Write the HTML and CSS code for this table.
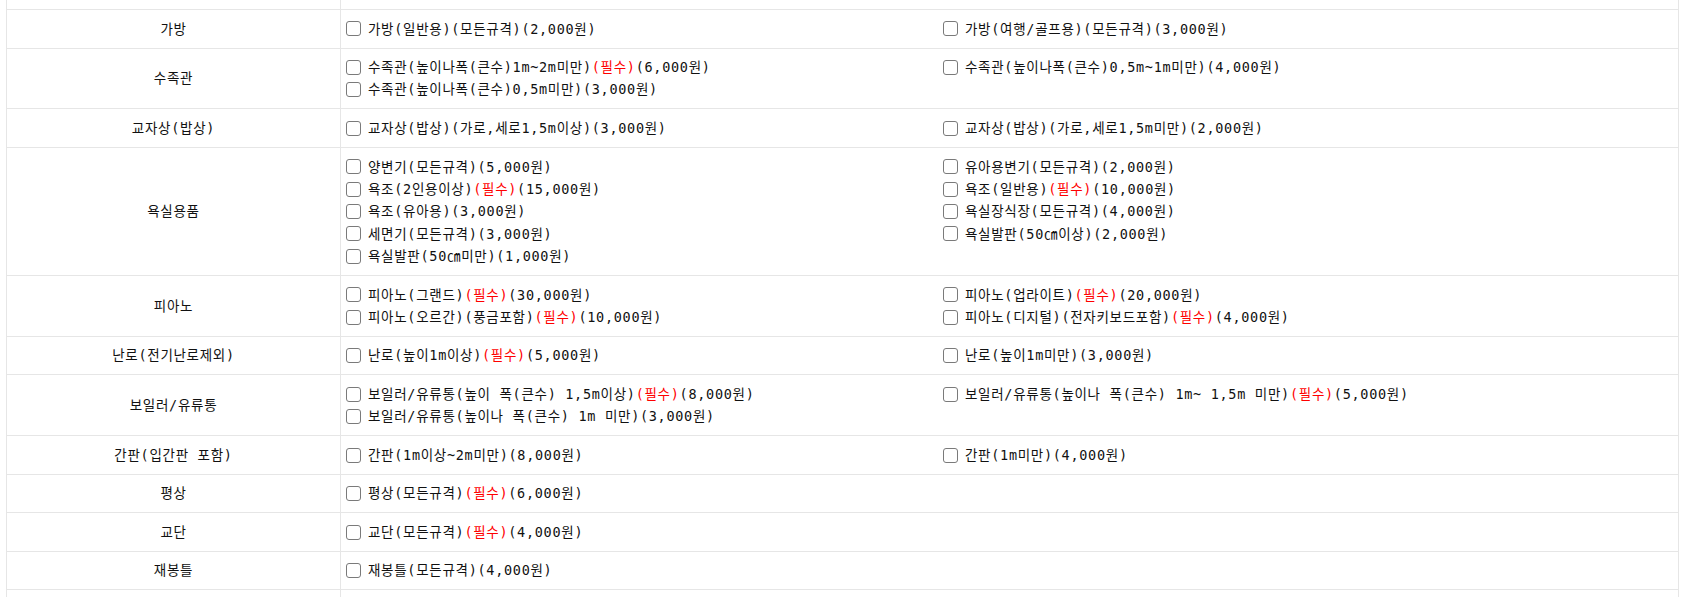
FILE: index.html
```html
<!DOCTYPE html>
<html lang="ko">
<head>
<meta charset="utf-8">
<title>품목 선택</title>
<link rel="stylesheet" href="styles.css">
</head>
<body>
<div class="board">
  <div class="row cut"><div class="label"></div><div class="cell"></div></div>

  <div class="row">
    <div class="label">가방</div>
    <div class="cell"><ul class="items">
      <li><input type="checkbox"><span>가방(일반용)(모든규격)(2,000원)</span></li>
      <li><input type="checkbox"><span>가방(여행/골프용)(모든규격)(3,000원)</span></li>
    </ul></div>
  </div>

  <div class="row">
    <div class="label">수족관</div>
    <div class="cell"><ul class="items">
      <li><input type="checkbox"><span>수족관(높이나폭(큰수)1m~2m미만)<em>(필수)</em>(6,000원)</span></li>
      <li><input type="checkbox"><span>수족관(높이나폭(큰수)0,5m~1m미만)(4,000원)</span></li>
      <li><input type="checkbox"><span>수족관(높이나폭(큰수)0,5m미만)(3,000원)</span></li>
    </ul></div>
  </div>

  <div class="row">
    <div class="label">교자상(밥상)</div>
    <div class="cell"><ul class="items">
      <li><input type="checkbox"><span>교자상(밥상)(가로,세로1,5m이상)(3,000원)</span></li>
      <li><input type="checkbox"><span>교자상(밥상)(가로,세로1,5m미만)(2,000원)</span></li>
    </ul></div>
  </div>

  <div class="row">
    <div class="label">욕실용품</div>
    <div class="cell"><ul class="items">
      <li><input type="checkbox"><span>양변기(모든규격)(5,000원)</span></li>
      <li><input type="checkbox"><span>유아용변기(모든규격)(2,000원)</span></li>
      <li><input type="checkbox"><span>욕조(2인용이상)<em>(필수)</em>(15,000원)</span></li>
      <li><input type="checkbox"><span>욕조(일반용)<em>(필수)</em>(10,000원)</span></li>
      <li><input type="checkbox"><span>욕조(유아용)(3,000원)</span></li>
      <li><input type="checkbox"><span>욕실장식장(모든규격)(4,000원)</span></li>
      <li><input type="checkbox"><span>세면기(모든규격)(3,000원)</span></li>
      <li><input type="checkbox"><span>욕실발판(50㎝이상)(2,000원)</span></li>
      <li><input type="checkbox"><span>욕실발판(50㎝미만)(1,000원)</span></li>
    </ul></div>
  </div>

  <div class="row">
    <div class="label">피아노</div>
    <div class="cell"><ul class="items">
      <li><input type="checkbox"><span>피아노(그랜드)<em>(필수)</em>(30,000원)</span></li>
      <li><input type="checkbox"><span>피아노(업라이트)<em>(필수)</em>(20,000원)</span></li>
      <li><input type="checkbox"><span>피아노(오르간)(풍금포함)<em>(필수)</em>(10,000원)</span></li>
      <li><input type="checkbox"><span>피아노(디지털)(전자키보드포함)<em>(필수)</em>(4,000원)</span></li>
    </ul></div>
  </div>

  <div class="row">
    <div class="label">난로(전기난로제외)</div>
    <div class="cell"><ul class="items">
      <li><input type="checkbox"><span>난로(높이1m이상)<em>(필수)</em>(5,000원)</span></li>
      <li><input type="checkbox"><span>난로(높이1m미만)(3,000원)</span></li>
    </ul></div>
  </div>

  <div class="row">
    <div class="label">보일러/유류통</div>
    <div class="cell"><ul class="items">
      <li><input type="checkbox"><span>보일러/유류통(높이 폭(큰수) 1,5m이상)<em>(필수)</em>(8,000원)</span></li>
      <li><input type="checkbox"><span>보일러/유류통(높이나 폭(큰수) 1m~ 1,5m 미만)<em>(필수)</em>(5,000원)</span></li>
      <li><input type="checkbox"><span>보일러/유류통(높이나 폭(큰수) 1m 미만)(3,000원)</span></li>
    </ul></div>
  </div>

  <div class="row">
    <div class="label">간판(입간판 포함)</div>
    <div class="cell"><ul class="items">
      <li><input type="checkbox"><span>간판(1m이상~2m미만)(8,000원)</span></li>
      <li><input type="checkbox"><span>간판(1m미만)(4,000원)</span></li>
    </ul></div>
  </div>

  <div class="row">
    <div class="label">평상</div>
    <div class="cell"><ul class="items">
      <li><input type="checkbox"><span>평상(모든규격)<em>(필수)</em>(6,000원)</span></li>
    </ul></div>
  </div>

  <div class="row">
    <div class="label">교단</div>
    <div class="cell"><ul class="items">
      <li><input type="checkbox"><span>교단(모든규격)<em>(필수)</em>(4,000원)</span></li>
    </ul></div>
  </div>

  <div class="row">
    <div class="label">재봉틀</div>
    <div class="cell"><ul class="items">
      <li><input type="checkbox"><span>재봉틀(모든규격)(4,000원)</span></li>
    </ul></div>
  </div>

  <div class="row">
    <div class="label">&nbsp;</div>
    <div class="cell"><ul class="items"><li>&nbsp;</li></ul></div>
  </div>
</div>
</body>
</html>
```

FILE: styles.css
```css
html, body {
  margin: 0;
  padding: 0;
  background: #fff;
}

body {
  font-family: "DejaVu Sans Mono", "Noto Sans CJK KR", monospace;
  font-size: 13.5px;
  letter-spacing: 0.7px;
  color: #111;
  overflow: hidden;
}

.board {
  margin-left: 6px;
  width: 1673px;
  box-sizing: border-box;
  border-left: 1px solid #e6e6e6;
  border-right: 1px solid #e6e6e6;
}

.row {
  display: grid;
  grid-template-columns: 334px 1fr;
  border-bottom: 1px solid #e6e6e6;
}

.row.cut {
  height: 9px;
}

.label {
  border-right: 1px solid #e6e6e6;
  display: flex;
  align-items: center;
  justify-content: center;
  line-height: 22.4px;
}

.cell {
  padding: 7.57px 0 7.57px 5px;
  line-height: 22.4px;
}

.row.cut .cell {
  padding: 0;
}

.items {
  list-style: none;
  margin: 0;
  padding: 0;
  display: grid;
  grid-template-columns: 597px auto;
}

.items li {
  display: flex;
  align-items: center;
  height: 22.4px;
  white-space: nowrap;
}

.items input {
  appearance: none;
  -webkit-appearance: none;
  width: 15px;
  height: 15px;
  margin: 0 7px 0 0;
  box-sizing: border-box;
  border: 1px solid #7a7a7a;
  border-radius: 3px;
  background: #fff;
  flex: none;
}

.items em {
  font-style: normal;
  color: #f00;
}
```
